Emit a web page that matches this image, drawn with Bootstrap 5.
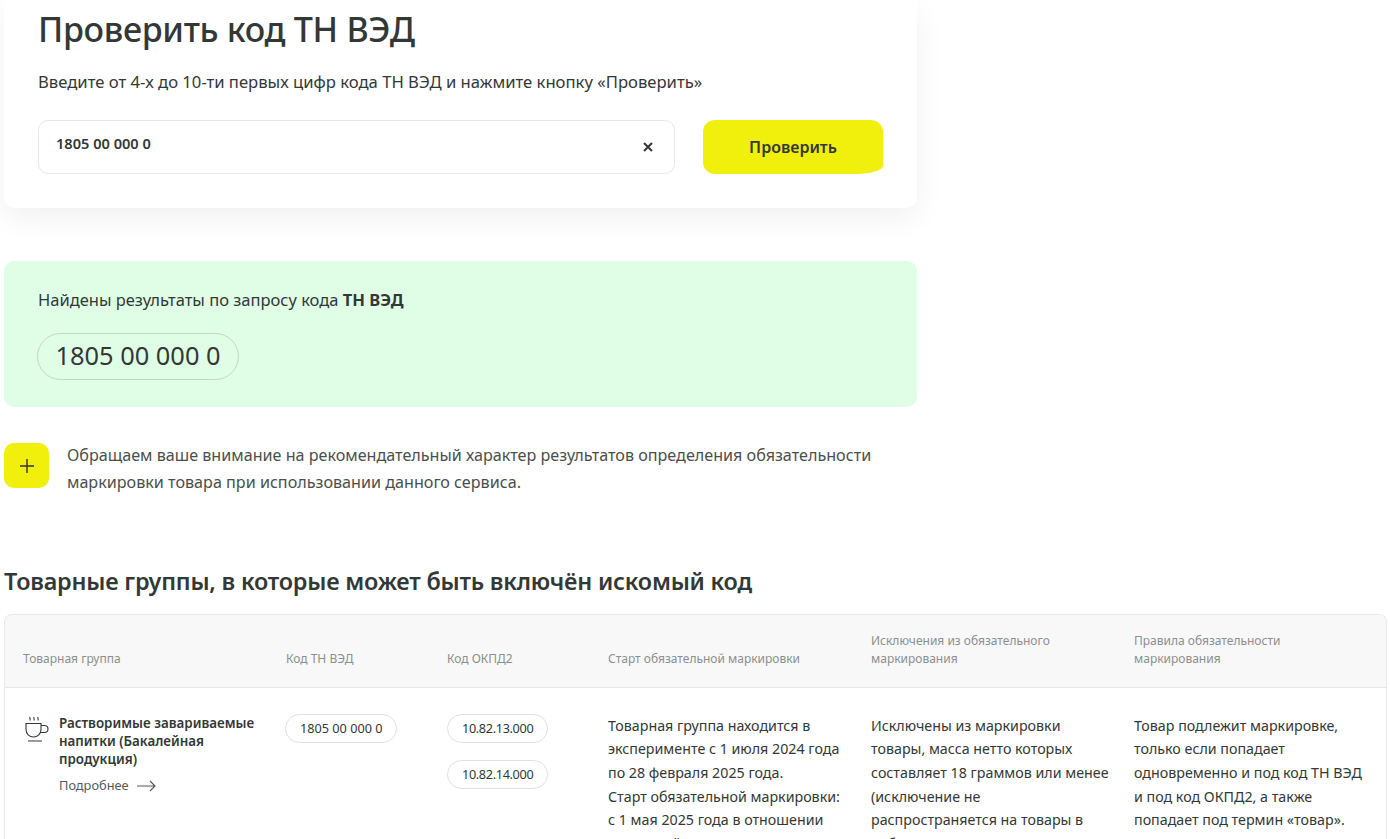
<!DOCTYPE html>
<html lang="ru">
<head>
  <meta charset="UTF-8" />
  <title>Проверить код ТН ВЭД</title>
  <link href="https://cdn.jsdelivr.net/npm/bootstrap@5.3.3/dist/css/bootstrap.min.css" rel="stylesheet" />
  <style>
    html, body { height: 839px; overflow: hidden; }
    body {
      font-family: "Noto Sans", "Open Sans", sans-serif;
      color: #333836;
      background: #fff;
      padding: 0 3px 0 4px;
    }
    .check-card {
      width: 913px;
      height: 208px;
      padding: 0 34px;
      background: #fff;
      border-radius: 0 0 10px 10px;
      box-shadow: 0 10px 30px rgba(0, 0, 0, .06);
    }
    .check-title { font-size: 34px; font-weight: 500; line-height: 58px; margin: 0 0 10px; letter-spacing: -.3px; }
    .check-hint { font-size: 16.65px; line-height: 28px; margin: 0 0 24px; }
    .code-field {
      flex: 0 0 637px;
      height: 54px;
      padding: 0 21px 6px 17px;
      border: 1px solid #e6e8e7;
      border-radius: 10px;
      font-size: 14.6px;
      font-weight: 600;
    }
    .clear-icon { margin-top: 6px; }
    .check-btn {
      width: 180px;
      height: 54px;
      margin-left: 28px;
      background: #f1ef0c;
      border: 0;
      border-radius: 12px 12px 30px 12px / 12px 12px 8px 12px;
      color: #333836;
      font-size: 16px;
      font-weight: 600;
    }
    .check-btn:hover { background: #f1ef0c; }
    .found-box {
      width: 913px;
      height: 146px;
      margin-top: 53px;
      padding: 25px 34px 0;
      background: #e0fee6;
      border-radius: 10px;
    }
    .found-text { font-size: 16.5px; line-height: 28px; margin: 0 0 19px; }
    .found-code {
      display: inline-block;
      padding: 0 17.5px;
      height: 47px;
      margin-left: -1px;
      line-height: 43px;
      font-size: 25.4px;
      border: 1px solid #c3d6c8;
      border-radius: 24px;
    }
    .note-row { width: 913px; margin-top: 33px; }
    .plus-box {
      flex: 0 0 45px;
      width: 45px;
      height: 45px;
      margin-top: 3px;
      margin-right: 18px;
      background: #f1ef0c;
      border-radius: 10px;
    }
    .note-text { font-size: 16.15px; line-height: 27px; margin: 0; padding-top: 2px; color: #4a4f4d; }
    .groups-title { font-size: 23.4px; font-weight: 600; line-height: 32px; margin: 69px 0 17px; letter-spacing: -.2px; }
    .groups-wrap {
      border: 1px solid #e8e9e9;
      border-bottom: 0;
      border-radius: 8px 8px 0 0;
      overflow: hidden;
    }
    .groups-table { width: 100%; table-layout: fixed; margin: 0; border-collapse: collapse; }
    .groups-table th {
      height: 72px;
      padding: 0 19px 19px 0;
      background: #f8f8f8;
      border-bottom: 1px solid #e6e7e7;
      font-size: 12px;
      font-weight: 400;
      line-height: 18px;
      color: #8b8f8e;
      vertical-align: bottom;
    }
    .groups-table th:first-child, .groups-table td:first-child { padding-left: 18px; }
    .groups-table td { padding: 26px 25px 0 0; vertical-align: top; font-size: 14.25px; line-height: 23.7px; }
    .groups-table td:last-child { padding-right: 14px; }
    .col-group { width: 281px; }
    .col-code { width: 161px; }
    .col-text { width: 263px; }
    .group-name { font-size: 13.4px; font-weight: 600; line-height: 18.2px; margin: 0 0 5px; }
    .more-link { font-size: 12.8px; color: #555a58; text-decoration: none; }
    .code-pill {
      display: block;
      width: fit-content;
      height: 29px;
      margin-left: -1px;
      padding: 0 14px;
      line-height: 27px;
      font-size: 12.7px;
      border: 1px solid #dfe0e0;
      border-radius: 15px;
      margin-bottom: 17px;
    }
    .code-pill-okpd { margin-left: 0; letter-spacing: -.35px; }
    .cup-icon { margin: 1px 8px 0 0; }
  </style>
</head>
<body>
  <div class="check-card">
    <h1 class="check-title">Проверить код ТН ВЭД</h1>
    <p class="check-hint">Введите от 4-х до 10-ти первых цифр кода ТН ВЭД и нажмите кнопку «Проверить»</p>
    <div class="d-flex align-items-center">
      <div class="code-field d-flex align-items-center justify-content-between">
        <span>1805 00 000 0</span>
        <svg width="10" height="10" viewBox="0 0 10 10" class="clear-icon"><path d="M1 1l8 8M9 1l-8 8" stroke="#333836" stroke-width="2" fill="none"/></svg>
      </div>
      <button type="button" class="btn check-btn">Проверить</button>
    </div>
  </div>

  <div class="found-box">
    <p class="found-text">Найдены результаты по запросу кода <b class="fw-bold">ТН ВЭД</b></p>
    <span class="found-code">1805 00 000 0</span>
  </div>

  <div class="note-row d-flex">
    <div class="plus-box d-flex align-items-center justify-content-center">
      <svg width="16" height="16" viewBox="0 0 16 16"><path d="M8 1v14M1 8h14" stroke="#2f3331" stroke-width="1.4" fill="none"/></svg>
    </div>
    <p class="note-text">Обращаем ваше внимание на рекомендательный характер результатов определения обязательности маркировки товара при использовании данного сервиса.</p>
  </div>

  <h2 class="groups-title">Товарные группы, в которые может быть включён искомый код</h2>

  <div class="groups-wrap">
    <table class="groups-table">
      <colgroup>
        <col class="col-group" /><col class="col-code" /><col class="col-code" /><col class="col-text" /><col class="col-text" /><col />
      </colgroup>
      <thead>
        <tr>
          <th>Товарная группа</th>
          <th>Код ТН ВЭД</th>
          <th>Код ОКПД2</th>
          <th>Старт обязательной маркировки</th>
          <th>Исключения из обязательного маркирования</th>
          <th>Правила обязательности маркирования</th>
        </tr>
      </thead>
      <tbody>
        <tr>
          <td>
            <div class="d-flex">
              <svg width="28" height="28" viewBox="0 0 28 28" class="cup-icon flex-shrink-0" fill="none" stroke="#333836" stroke-width="1.1">
                <path d="M3 8.500v6a7.500 7.500 0 0 0 7.500 7.500a7.500 7.500 0 0 0 7.500-7.500v-6z"/>
                <path d="M18 10.500h3.500a3.500 3.500 0 0 1 0 7H17"/>
                <path d="M5 26h14"/>
                <path d="M7 2c-.7 1 .7 2 0 3.500M11 2c-.7 1 .7 2 0 3.500M15 2c-.7 1 .7 2 0 3.500"/>
              </svg>
              <div>
                <p class="group-name">Растворимые завариваемые напитки (Бакалейная продукция)</p>
                <a href="#" class="more-link d-inline-flex align-items-center gap-2">Подробнее
                  <svg width="20" height="14" viewBox="0 0 20 14" fill="none" stroke="#555a58" stroke-width="1.2"><path d="M0 7h18M13 2l5 5-5 5"/></svg>
                </a>
              </div>
            </div>
          </td>
          <td><span class="code-pill">1805 00 000 0</span></td>
          <td><span class="code-pill code-pill-okpd">10.82.13.000</span><span class="code-pill code-pill-okpd">10.82.14.000</span></td>
          <td>Товарная группа находится в эксперименте с 1 июля 2024 года по 28 февраля 2025 года.<br />Старт обязательной маркировки: с 1 мая 2025 года в отношении отдельной продукции</td>
          <td>Исключены из маркировки товары, масса нетто которых составляет 18 граммов или менее (исключение не распространяется на товары в наборах)</td>
          <td>Товар подлежит маркировке, только если попадает одновременно и под код ТН ВЭД и под код ОКПД2, а также попадает под термин «товар».</td>
        </tr>
      </tbody>
    </table>
  </div>
  <script src="https://cdn.jsdelivr.net/npm/bootstrap@5.3.3/dist/js/bootstrap.bundle.min.js"></script>
</body>
</html>
